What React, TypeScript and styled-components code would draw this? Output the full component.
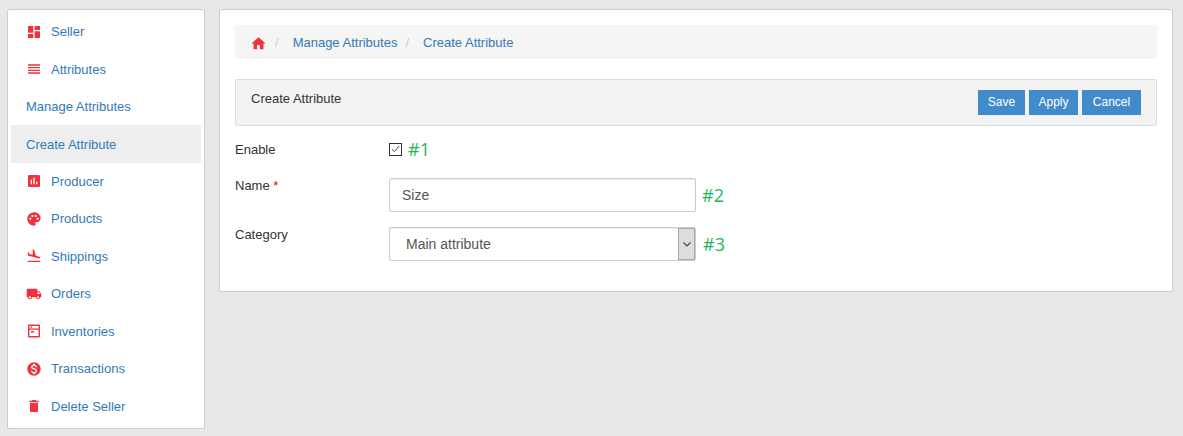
import { ReactNode } from "react";
import { createGlobalStyle, styled } from "styled-components";
import {
  MdAssessment,
  MdDashboard,
  MdDelete,
  MdFlightLand,
  MdHome,
  MdLocalShipping,
  MdMonetizationOn,
  MdPalette,
  MdReorder,
} from "react-icons/md";

const InventoryIcon = () => (
  <svg width="16" height="16" viewBox="0 0 16 16" fill="#f0323c">
    <path d="M3 1.5h10a1 1 0 0 1 1 1v11a1 1 0 0 1-1 1H3a1 1 0 0 1-1-1v-11a1 1 0 0 1 1-1zm.4 1.4v2.5h9.2V2.9H3.400zm0 3.800v6.400h9.200V6.700H3.400zM5 8h3v1.500H5V8zM4.500 3.400h1.500v1.400H4.500V3.400z" fillRule="evenodd" />
  </svg>
);

type NavEntry = { label: string; icon?: ReactNode; active?: boolean };

const navItems: NavEntry[] = [
  { label: "Seller", icon: <MdDashboard size={16} /> },
  { label: "Attributes", icon: <MdReorder size={16} /> },
  { label: "Manage Attributes" },
  { label: "Create Attribute", active: true },
  { label: "Producer", icon: <MdAssessment size={16} /> },
  { label: "Products", icon: <MdPalette size={16} /> },
  { label: "Shippings", icon: <MdFlightLand size={16} /> },
  { label: "Orders", icon: <MdLocalShipping size={16} /> },
  { label: "Inventories", icon: <InventoryIcon /> },
  { label: "Transactions", icon: <MdMonetizationOn size={16} /> },
  { label: "Delete Seller", icon: <MdDelete size={16} /> },
];

const App = () => {
  return (
    <Page>
      <GlobalStyle />
      <Sidebar>
        {navItems.map((item) => (
          <NavItem key={item.label} $active={item.active}>
            {item.icon && <NavIcon>{item.icon}</NavIcon>}
            {item.label}
          </NavItem>
        ))}
      </Sidebar>
      <Main>
        <Breadcrumb>
          <HomeIcon>
            <MdHome size={17} />
          </HomeIcon>
          <Slash>/</Slash>
          <Crumb>Manage Attributes</Crumb>
          <Slash>/</Slash>
          <Crumb>Create Attribute</Crumb>
        </Breadcrumb>
        <PanelHeading>
          <PanelTitle>Create Attribute</PanelTitle>
          <ButtonRow>
            <ActionButton $width={47}>Save</ActionButton>
            <ActionButton $width={49}>Apply</ActionButton>
            <ActionButton $width={59}>Cancel</ActionButton>
          </ButtonRow>
        </PanelHeading>
        <EnableRow>
          <FieldLabel>Enable</FieldLabel>
          <CheckBox>
            <svg width="9" height="8" viewBox="0 0 9 8">
              <path d="M0.8 4.2 L3.3 6.6 L8.2 1" fill="none" stroke="#444" strokeWidth="1" />
            </svg>
          </CheckBox>
          <Note $gap={6}>#1</Note>
        </EnableRow>
        <FieldRow>
          <FieldLabel>
            Name <Required>*</Required>
          </FieldLabel>
          <TextInput defaultValue="Size" />
          <Note $gap={6}>#2</Note>
        </FieldRow>
        <FieldRow>
          <FieldLabel>Category</FieldLabel>
          <SelectBox>
            <SelectValue>Main attribute</SelectValue>
            <SelectArrow>
              <svg width="8" height="5" viewBox="0 0 8 5">
                <path d="M0.5 0.5 L4 4 L7.5 0.5" fill="none" stroke="#444" strokeWidth="1.1" />
              </svg>
            </SelectArrow>
          </SelectBox>
          <Note $gap={7}>#3</Note>
        </FieldRow>
      </Main>
    </Page>
  );
};

export default App;

const GlobalStyle = createGlobalStyle`
  html, body {
    margin: 0;
    padding: 0;
    background: #e8e8ea;
    font-family: "Liberation Sans", Arial, sans-serif;
  }
  * {
    box-sizing: border-box;
  }
`;

const Page = styled.div`
  display: flex;
  align-items: flex-start;
  gap: 14px;
  width: 1183px;
  height: 436px;
  padding: 9px 10px 0 7px;
  overflow: hidden;
`;

const Sidebar = styled.nav`
  width: 198px;
  height: 420px;
  padding: 3px 3px 0;
  background: #fff;
  border: 1px solid #ccc;
  border-radius: 2px;
  flex-shrink: 0;
`;

const NavItem = styled.div<{ $active?: boolean }>`
  display: flex;
  align-items: center;
  height: 37.45px;
  padding-left: 15px;
  font-size: 13px;
  color: #337ab7;
  background: ${(p) => (p.$active ? "#eee" : "transparent")};
`;

const NavIcon = styled.span`
  display: flex;
  width: 25px;
  color: #f0323c;
`;

const Main = styled.main`
  width: 954px;
  height: 283px;
  padding: 15px 15px 0;
  background: #fff;
  border: 1px solid #ccc;
  border-radius: 2px;
`;

const Breadcrumb = styled.div`
  display: flex;
  align-items: center;
  height: 34px;
  padding-left: 15px;
  margin-bottom: 20px;
  background: #f5f5f5;
  border-radius: 4px;
  font-size: 13px;
`;

const HomeIcon = styled.span`
  display: flex;
  color: #f0323c;
  margin-top: 2px;
`;

const Slash = styled.span`
  color: #ccc;
  margin: 0 14px 0 8px;
`;

const Crumb = styled.span`
  color: #337ab7;
`;

const PanelHeading = styled.div`
  display: flex;
  justify-content: space-between;
  align-items: flex-start;
  height: 47px;
  padding: 10px 15px;
  background: #f3f3f3;
  border: 1px solid #ddd;
  border-radius: 2px;
`;

const PanelTitle = styled.span`
  font-size: 13px;
  line-height: 18px;
  color: #333;
`;

const ButtonRow = styled.div`
  display: flex;
  gap: 4px;
`;

const ActionButton = styled.button<{ $width: number }>`
  width: ${(p) => p.$width}px;
  height: 25px;
  padding: 0 0 1px;
  border: 0;
  background: #428bca;
  color: #fff;
  font-family: inherit;
  font-size: 12px;
`;

const FieldRow = styled.div`
  display: flex;
  align-items: flex-start;
  height: 49px;
`;

const EnableRow = styled(FieldRow)`
  align-items: center;
  height: 46px;
  margin-bottom: 6px;
`;

const FieldLabel = styled.label`
  width: 154px;
  padding-top: 1px;
  font-size: 13px;
  line-height: 14px;
  color: #333;
  flex-shrink: 0;
`;

const Required = styled.span`
  color: #e00;
`;

const CheckBox = styled.span`
  display: flex;
  align-items: center;
  justify-content: center;
  width: 13px;
  height: 13px;
  border: 1px solid #333;
  background: #fff;
`;

const Note = styled.span<{ $gap: number }>`
  margin-left: ${(p) => p.$gap}px;
  font-family: "Open Sans", sans-serif;
  font-size: 18px;
  line-height: 34px;
  color: #1eb854;
`;

const TextInput = styled.input`
  width: 307px;
  height: 34px;
  padding: 0 12px;
  border: 1px solid #ccc;
  border-radius: 2px;
  background: #fff;
  box-shadow: inset 0 1px 1px rgba(0, 0, 0, 0.075);
  font-family: inherit;
  font-size: 14px;
  color: #555;
  outline: none;
`;

const SelectBox = styled.div`
  display: flex;
  justify-content: space-between;
  width: 307px;
  height: 34px;
  padding: 0 0 0 16px;
  border: 1px solid #ccc;
  border-radius: 2px;
  box-shadow: inset 0 1px 1px rgba(0, 0, 0, 0.075);
`;

const SelectValue = styled.span`
  font-size: 14px;
  line-height: 32px;
  color: #555;
`;

const SelectArrow = styled.span`
  display: flex;
  align-items: center;
  justify-content: center;
  width: 17px;
  background: #ddd;
  border: 1px solid #a6a6a6;
`;
